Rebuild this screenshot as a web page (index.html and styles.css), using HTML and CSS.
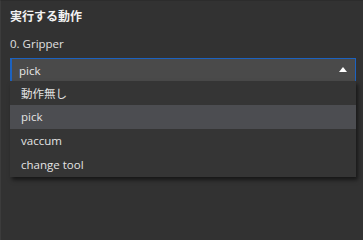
FILE: index.html
```html
<!DOCTYPE html>
<html lang="ja">
<head>
<meta charset="utf-8">
<title>実行する動作</title>
<link rel="stylesheet" href="styles.css">
</head>
<body>
<div class="panel">
  <div class="title">実行する動作</div>
  <div class="label">0. Gripper</div>
  <div class="field">
    <div class="select">
      <span class="value">pick</span>
      <span class="arrow"></span>
    </div>
    <ul class="menu">
      <li class="item">動作無し</li>
      <li class="item active">pick</li>
      <li class="item">vaccum</li>
      <li class="item">change tool</li>
    </ul>
  </div>
</div>
</body>
</html>
```

FILE: styles.css
```css
html, body {
  margin: 0;
  padding: 0;
  background: #323232;
  height: 100%;
}
body {
  font-family: "Open Sans", "Noto Sans CJK JP", sans-serif;
  color: #e6e6e6;
  overflow: hidden;
}
.panel {
  height: 100%;
  box-sizing: border-box;
  border-left: 1px solid #3c3c3c;
  border-top: 1px solid #2c2c2c;
  padding: 7px 7px 0 9px;
}
.title {
  font-family: "Noto Sans CJK JP", sans-serif;
  font-weight: bold;
  font-size: 12px;
  line-height: 16px;
  color: #f2f2f2;
}
.label {
  margin-top: 12px;
  font-size: 11.5px;
  line-height: 16px;
  color: #e0e0e0;
}
.field {
  position: relative;
  margin-top: 6px;
}
.select {
  height: 22px;
  box-sizing: border-box;
  height: 23px;
  background: #4a4a4a;
  border: 1px solid #1c62c0;
  border-left-width: 2px;
  border-bottom: none;
  display: flex;
  align-items: center;
  justify-content: space-between;
  padding: 0 8px 0 7px;
}
.value {
  font-size: 11.5px;
  color: #e8e8e8;
}
.arrow {
  width: 0;
  height: 0;
  border-left: 4px solid transparent;
  border-right: 4px solid transparent;
  border-bottom: 5px solid #ffffff;
  margin-top: -1px;
}
.menu {
  position: absolute;
  left: 0;
  right: 0;
  top: 23px;
  margin: 0;
  padding: 0;
  list-style: none;
  background: #353535;
  box-shadow: 2px 3px 4px rgba(0, 0, 0, 0.55);
}
.item {
  height: 24px;
  line-height: 24px;
  padding-left: 11px;
  font-size: 11.5px;
  color: #e4e4e4;
}
.item:first-child {
  font-family: "Noto Sans CJK JP", sans-serif;
}
.item.active {
  background: #4c4d51;
}
```
